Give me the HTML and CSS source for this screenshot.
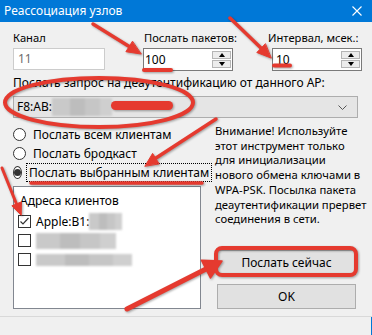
FILE: index.html
```html
<!DOCTYPE html>
<html lang="ru">
<head>
<meta charset="utf-8">
<title>Реассоциация узлов</title>
<link rel="stylesheet" href="styles.css">
</head>
<body>
<div class="window">
  <div class="titlebar">
    <span class="title">Реассоциация узлов</span>
    <svg class="close" width="10" height="10" viewBox="0 0 10 10"><path d="M0.5 0.5L9.5 9.5M9.5 0.5L0.5 9.5" stroke="#fff" stroke-width="1.1"/></svg>
  </div>
  <div class="panel">
    <div class="fields">
      <div class="field">
        <label class="flabel">Канал</label>
        <div class="textbox">11</div>
      </div>
      <div class="field">
        <label class="flabel pad1">Послать пакетов:</label>
        <div class="spin">
          <span class="spin-val">100</span>
          <span class="spin-btns">
            <span class="spin-btn"><span class="tri-up"></span></span>
            <span class="spin-btn"><span class="tri-down"></span></span>
          </span>
        </div>
      </div>
      <div class="field">
        <label class="flabel lab3">Интервал, мсек.:</label>
        <div class="spin">
          <span class="spin-val v2">10</span>
          <span class="spin-btns">
            <span class="spin-btn"><span class="tri-up"></span></span>
            <span class="spin-btn"><span class="tri-down"></span></span>
          </span>
        </div>
      </div>
    </div>
    <div class="ap-label">Послать запрос на деаутентификацию от данного AP:</div>
    <div class="combo">
      <span class="combo-text">F8:AB:</span><span class="blur blur-ap"></span>
      <svg class="chev" width="9" height="5" viewBox="0 0 9 5"><path d="M0.5 0.5L4.5 4.5L8.5 0.5" fill="none" stroke="#555" stroke-width="1"/></svg>
    </div>
    <div class="main">
      <div class="left">
        <div class="radios">
          <div class="radio-row"><span class="radio"></span><span class="rlabel">Послать всем клиентам</span></div>
          <div class="radio-row"><span class="radio"></span><span class="rlabel">Послать бродкаст</span></div>
          <div class="radio-row"><span class="radio checked"></span><span class="rlabel focus">Послать выбранным клиентам</span></div>
        </div>
        <div class="listbox">
          <div class="lb-head">Адреса клиентов</div>
          <div class="lb-item"><span class="check on"><svg width="11" height="11" viewBox="0 0 11 11"><path d="M1.5 5.5L4 8L9.5 2" fill="none" stroke="#333" stroke-width="1.2"/></svg></span><span>Apple:B1:</span><span class="blur blur-1"></span></div>
          <div class="lb-item"><span class="check"></span><span class="blur blur-2"></span></div>
          <div class="lb-item"><span class="check"></span><span class="blur blur-3"></span></div>
        </div>
      </div>
      <div class="right">
        <p class="warning">Внимание! Используйте<br>этот инструмент только<br>для инициализации<br>нового обмена ключами в<br>WPA-PSK. Посылка пакета<br>деаутентификации прервет<br>соединения в сети.</p>
        <div class="buttons">
          <button class="btn">Послать сейчас</button>
          <button class="btn">OK</button>
        </div>
      </div>
    </div>
  </div>
</div>
<div class="parent"></div>

<svg class="annot" width="372" height="335" viewBox="0 0 372 335">
  <g class="marks" fill="none" stroke="#e53a2f" stroke-linecap="round" stroke-linejoin="round">
    <path d="M93 24L130 47" stroke-width="3.5"/>
    <polygon points="141,54 125.9,51.7 132.3,41.5" fill="#e53a2f" stroke-width="1"/>
    <path d="M230 18L262 49" stroke-width="3.5"/>
    <polygon points="271,58 256.8,52.5 265.2,43.9" fill="#e53a2f" stroke-width="1"/>
    <path d="M144 70H171" stroke-width="4"/>
    <path d="M274 65.5H290" stroke-width="4"/>
    <ellipse cx="99" cy="102.5" rx="94" ry="24.5" stroke-width="4"/>
    <rect x="111" y="101" width="62" height="9" rx="4.5" fill="#e53a2f" stroke="none"/>
    <path d="M216 119L156 158" stroke-width="3.5"/>
    <polygon points="145,166 152.6,153.4 159,163.6" fill="#e53a2f" stroke-width="1"/>
    <path d="M31 183H202" stroke-width="3.5"/>
    <path d="M2 168L16.5 204" stroke-width="3"/>
    <polygon points="21,215 11.9,205.8 21.1,202" fill="#e53a2f" stroke-width="1"/>
    <path d="M127 309L206 269" stroke-width="5"/>
    <polygon points="222,261 210.4,278 201.4,260.2" fill="#e53a2f" stroke-width="1.5"/>
    <rect x="216" y="248" width="140" height="27" rx="6" stroke-width="4"/>
  </g>
</svg>
</body>
</html>
```

FILE: styles.css
```css
html, body {
  margin: 0;
  padding: 0;
}

body {
  width: 372px;
  height: 335px;
  background: #f0f0f0;
  font-family: "Noto Sans", "Open Sans", sans-serif;
  font-size: 12px;
  color: #000;
  position: relative;
  overflow: hidden;
}

.window {
  height: 317px;
  box-sizing: border-box;
  border-bottom: 1px solid #d9d9d9;
}

.titlebar {
  height: 22px;
  background: #0078d7;
  color: #fff;
  display: flex;
  align-items: center;
  justify-content: space-between;
  padding: 0 10px 0 4px;
}

.title {
  line-height: 22px;
}

.panel {
  padding: 8px 14px 0 13px;
}

.fields {
  display: grid;
  grid-template-columns: 130px 129px 90px;
}

.field:first-child {
  width: 92px;
}

.field:nth-child(2) {
  width: 90px;
}

.flabel {
  display: block;
  font-size: 11.2px;
  line-height: 15px;
  height: 15px;
  margin-bottom: 3px;
  white-space: nowrap;
}

.pad1 {
  padding-left: 1px;
}

.lab3 {
  margin-left: -4px;
}

.textbox {
  height: 22px;
  margin-top: 1px;
  box-sizing: border-box;
  border: 1px solid #cccccc;
  background: #fff;
  color: #6d6d6d;
  padding-left: 4px;
  line-height: 20px;
}

.spin {
  height: 23px;
  box-sizing: border-box;
  border: 1px solid #7a7a7a;
  background: #fff;
  display: flex;
  align-items: stretch;
}

.spin-val {
  flex: 1;
  padding-left: 1px;
  line-height: 22px;
}

.spin-val.v2 {
  padding-left: 3px;
}

.spin-btns {
  display: flex;
  flex-direction: column;
  gap: 1px;
  padding: 2px 1px 2px 0;
}

.spin-btn {
  width: 19px;
  height: 8px;
  background: #ececec;
  border: 1px solid #b5b5b5;
  box-sizing: border-box;
  flex: 1;
  display: flex;
  align-items: center;
  justify-content: center;
}

.tri-up,
.tri-down {
  width: 0;
  height: 0;
  border-left: 3.5px solid transparent;
  border-right: 3.5px solid transparent;
}

.tri-up {
  border-bottom: 4px solid #000;
}

.tri-down {
  border-top: 4px solid #000;
}

.ap-label {
  margin-top: 4px;
  line-height: 15px;
  white-space: nowrap;
}

.combo {
  margin-top: 6px;
  height: 22px;
  box-sizing: border-box;
  border: 1px solid #adadad;
  background: #e5e5e5;
  display: flex;
  align-items: center;
  padding: 0 10px 0 3px;
}

.combo-text {
  line-height: 20px;
}

.chev {
  margin-left: auto;
}

.blur {
  display: inline-block;
  background: linear-gradient(90deg, #c9c9c9 0 30%, #bdbdbd 30% 55%, #c6c6c6 55% 80%, #cfcfcf 80%);
  filter: blur(1px);
}

.blur-ap {
  width: 60px;
  height: 18px;
}

.main {
  margin-top: 6px;
  display: grid;
  grid-template-columns: 188px 143px;
  column-gap: 14px;
}

.radios {
  padding-top: 1px;
}

.radio-row {
  height: 19px;
  display: flex;
  align-items: center;
}

.radio {
  width: 13px;
  height: 13px;
  box-sizing: border-box;
  border: 1px solid #333;
  border-radius: 50%;
  background: #fff;
  display: flex;
  align-items: center;
  justify-content: center;
}

.radio.checked::after {
  content: "";
  width: 7px;
  height: 7px;
  border-radius: 50%;
  background: #333;
}

.rlabel {
  margin-left: 4px;
  padding: 0 2px;
  line-height: 17px;
  border: 1px dotted transparent;
  white-space: nowrap;
}

.rlabel.focus {
  border-color: #000;
}

.listbox {
  margin-top: 4px;
  height: 123px;
  box-sizing: border-box;
  border: 1px solid #828790;
  background: #fff;
}

.lb-head {
  height: 25px;
  box-sizing: border-box;
  padding: 5px 0 0 6px;
  line-height: 17px;
}

.lb-item {
  height: 19px;
  display: flex;
  align-items: center;
  padding-left: 4px;
  white-space: nowrap;
}

.check {
  width: 13px;
  height: 13px;
  box-sizing: border-box;
  border: 1px solid #333;
  background: #fff;
  margin-right: 5px;
  display: flex;
  align-items: center;
  justify-content: center;
}

.blur-1 {
  width: 33px;
  height: 17px;
}

.blur-2 {
  width: 80px;
  height: 16px;
}

.blur-3 {
  width: 96px;
  height: 12px;
}

.right {
  min-width: 0;
}

.warning {
  margin: 0;
  font-size: 11.3px;
  line-height: 14.7px;
  white-space: nowrap;
}

.buttons {
  margin-top: 23px;
  margin-left: 2px;
  display: flex;
  flex-direction: column;
  gap: 9px;
}

.btn {
  width: 139px;
  height: 25px;
  box-sizing: border-box;
  border: 1px solid #adadad;
  background: #e1e1e1;
  font: inherit;
  color: #000;
  padding: 0;
}

.parent {
  height: 18px;
  border-right: 1px solid #0078d7;
}

.annot {
  position: absolute;
  left: 0;
  top: 0;
  pointer-events: none;
}

.marks {
  filter: drop-shadow(1px 1px 1px rgba(0, 0, 0, 0.35));
}
```
